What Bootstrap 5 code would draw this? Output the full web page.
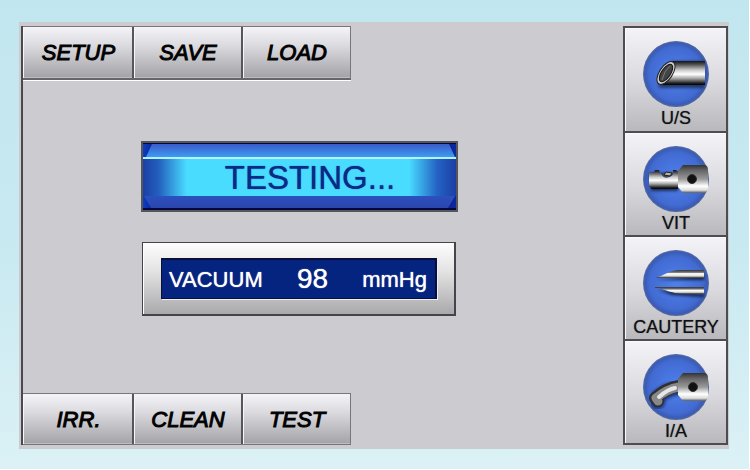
<!DOCTYPE html>
<html lang="en">
<head>
<meta charset="utf-8">
<meta name="viewport" content="width=device-width, initial-scale=1">
<title>Surgical console</title>
<link href="https://cdn.jsdelivr.net/npm/bootstrap@5.3.0/dist/css/bootstrap.min.css" rel="stylesheet">
<style>
  html { background: #fff; }
  body { font-family: "Liberation Sans", Arial, sans-serif; background: linear-gradient(#c2e6ef, #c8e9f1 50%, #dbf1f5); color: #000; margin-right: 1px; padding: 22px 20px 20px 19px; }
  .console { background: #cccbd0; padding: 4px 1px 4px 2px; }
  .main-area { border-left: 2px solid #4a494e; }
  .keys { border: 1px solid #77767b; border-left: 0; width: 328px; max-width: 100%; }
  .keys-top { border-bottom: 2px solid #66656a; box-shadow: 0 1px #fff; }
  .key { height: 50px; border: 0; border-left: 2px solid #56555a; background: linear-gradient(#f4f3f8, #dcdbe0 35%, #a3a2a6); box-shadow: inset 1px 0 #f6f5fa, inset 0 -1px #bdbcc1; color: #000; font-size: 22px; line-height: 24px; font-style: italic; padding: 1px 0 0 1px; -webkit-text-stroke: 1px #000; }
  .keys-top .key { height: 51px; }
  .key:first-child { border-left: 0; padding-left: 2px; }
  .displays { padding-left: 118px; gap: 30px; margin-bottom: 16px; }
  .status { width: 317px; max-width: 100%; border: 2px solid #55555c; background: linear-gradient(90deg, #0c3fc0, #0b1a90 4%, #0b1a90 96%, #0c2aa0); }
  .glass { border-top: 1px solid #05063c; border-bottom: 2px solid #05063c; }
  .bevel { height: 13px; margin: 0 1px 0 3px; background: linear-gradient(#3a5acb, #3d9cf0); clip-path: polygon(6px 0, calc(100% - 6px) 0, 100% 100%, 0 100%); }
  .bevel-low { height: 12px; margin: 0 1px; background: linear-gradient(#2c50c0, #2a46ac); clip-path: polygon(0 0, 100% 0, calc(100% - 7px) 100%, 7px 100%); }
  .lit { border-top: 2px solid #b4f2ff; background: linear-gradient(90deg, #1c3fa4, #2360be 5%, #49dcff 14%, #49dcff 85%, #2462c4 94%, #1c3fa4); color: #0b2a86; font-size: 33px; line-height: 37px; padding-left: 21px; text-shadow: 0 0 1px #0b2a86; }
  .gauge { width: 314px; max-width: 100%; border: 1px solid #45444a; border-right-width: 2px; border-bottom-width: 2px; background: linear-gradient(#fdfdfd, #e3e3e4 40%, #a9a9ab); box-shadow: inset 1px 0 #fff; margin-left: 1px; padding: 15px 17px 15px 18px; }
  .readout { height: 41px; background: #04247f; border: 1px solid #0a0e38; border-top-width: 2px; border-right-width: 2px; box-shadow: 1px 1px #eef0f8; color: #fff; font-size: 22px; padding: 0 8px 0 7px; text-shadow: 0 0 1px #fff; }
  .value { font-size: 28px; }
  .tools { width: 105px; border: 2px solid #4d4c51; gap: 2px; background: #4d4c51; }
  .tool { border: 0; background: linear-gradient(#f4f3f7, #d8d7db 55%, #b9b8bc); box-shadow: inset 1px 1px #fafafc; color: #101014; font-size: 18px; line-height: 20px; height: 103px; padding: 12px 0 0 1px; text-shadow: 0 0 1px #555; }
  .tool + .tool { height: 102px; }
  .tool svg { width: 68px; height: 68px; }
</style>
<script src="https://cdn.jsdelivr.net/npm/bootstrap@5.3.0/dist/js/bootstrap.bundle.min.js"></script>
</head>
<body>
<svg width="0" height="0" class="position-absolute" aria-hidden="true">
  <defs>
    <radialGradient id="disc" cx=".5" cy=".5" r=".5"><stop offset="0" stop-color="#4f80ee"/><stop offset=".8" stop-color="#426bd2"/><stop offset=".93" stop-color="#3a5cb8"/><stop offset="1" stop-color="#54689c"/></radialGradient>
    <linearGradient id="steel" x1="0" y1="0" x2="0" y2="1"><stop offset="0" stop-color="#151515"/><stop offset=".12" stop-color="#444"/><stop offset=".38" stop-color="#ccc"/><stop offset=".55" stop-color="#fff"/><stop offset=".72" stop-color="#aaa"/><stop offset=".92" stop-color="#222"/><stop offset="1" stop-color="#000"/></linearGradient>
    <linearGradient id="hub" x1="0" y1="0" x2="0" y2="1"><stop offset="0" stop-color="#333"/><stop offset=".2" stop-color="#666"/><stop offset=".5" stop-color="#999"/><stop offset=".75" stop-color="#fff"/><stop offset=".9" stop-color="#ddd"/><stop offset="1" stop-color="#555"/></linearGradient>
    <linearGradient id="blade" x1="0" y1="0" x2="0" y2="1"><stop offset="0" stop-color="#333"/><stop offset=".3" stop-color="#777"/><stop offset=".45" stop-color="#fff"/><stop offset=".75" stop-color="#ddd"/><stop offset="1" stop-color="#222"/></linearGradient>
    <filter id="soft" x="-20%" y="-50%" width="140%" height="200%"><feGaussianBlur stdDeviation="1.5"/></filter>
  </defs>
</svg>
<main class="console d-flex justify-content-between">
  <section class="main-area flex-grow-1 d-flex flex-column justify-content-between">
    <div class="keys keys-top row row-cols-3 g-0">
      <button type="button" class="key col">SETUP</button>
      <button type="button" class="key col">SAVE</button>
      <button type="button" class="key col">LOAD</button>
    </div>
    <div class="displays d-flex flex-column">
      <div class="status" role="status">
        <div class="glass">
          <div class="bevel"></div>
          <div class="lit text-center">TESTING...</div>
          <div class="bevel-low"></div>
        </div>
      </div>
      <div class="gauge">
        <div class="readout d-flex justify-content-between align-items-center">
          <span>VACUUM</span><span class="value">98</span><span>mmHg</span>
        </div>
      </div>
    </div>
    <div class="keys row row-cols-3 g-0">
      <button type="button" class="key col">IRR.</button>
      <button type="button" class="key col">CLEAN</button>
      <button type="button" class="key col">TEST</button>
    </div>
  </section>
  <nav class="tools d-flex flex-column" aria-label="Handpieces">
    <button type="button" class="tool d-flex flex-column align-items-center">
      <svg viewBox="0 0 68 68" aria-hidden="true"><circle cx="34" cy="34" r="33" fill="url(#disc)"/>
        <path d="M16 47 30 21H62V48H20Z" filter="url(#soft)" opacity=".5"/>
        <path d="M31 21H63V45H19C15 45 14 41 17 35 20 27 26 22 31 21Z" fill="url(#steel)"/>
        <ellipse cx="24" cy="33" rx="13" ry="6.500" transform="rotate(-56 24 33)" fill="#ccc" stroke="#222"/>
        <ellipse cx="24" cy="33" rx="10" ry="4.500" transform="rotate(-56 24 33)" fill="#444" stroke="#111"/>
        <path d="M20 40Q22 31 28 26" fill="none" stroke="#777" stroke-width="1"/></svg>
      U/S
    </button>
    <button type="button" class="tool d-flex flex-column align-items-center">
      <svg viewBox="0 0 68 68" aria-hidden="true"><circle cx="34" cy="34" r="33" fill="url(#disc)"/>
        <path d="M7 28H36V46H9Z" filter="url(#soft)" opacity=".6"/>
        <path d="M7 28 9 28 12 27 13 25H17C19 33 29 34 31 29V25H34L36 27V44H10L7 41Z" fill="url(#steel)"/>
        <path d="M20 30C22 34 27 33 30 30L29 27H23Z" fill="#3c4a66"/>
        <path d="M22 30 24 27 30 28 28 31Z" fill="#b8b89c" stroke="#222"/>
        <path d="M36 26 41 20H62Q66 20 66 25V43Q65 48 61 48H41L36 42Z" fill="url(#hub)"/>
        <circle cx="50" cy="34" r="4.500" fill="#111" stroke="#333"/></svg>
      VIT
    </button>
    <button type="button" class="tool d-flex flex-column align-items-center">
      <svg viewBox="0 0 68 68" aria-hidden="true"><circle cx="34" cy="34" r="33" fill="url(#disc)"/>
        <path d="M14 31 62 26V31Z M16 41 62 45V48L30 46Z" filter="url(#soft)" opacity=".7"/>
        <path d="M13 29C22 27 27 21 38 21H62V29Z" fill="url(#blade)"/>
        <path d="M13 38H62V45H42C30 45 24 40 13 39Z" fill="url(#blade)"/></svg>
      CAUTERY
    </button>
    <button type="button" class="tool d-flex flex-column align-items-center">
      <svg viewBox="0 0 68 68" aria-hidden="true"><circle cx="34" cy="34" r="33" fill="url(#disc)"/>
        <g fill="none" stroke-linecap="round" stroke-linejoin="round">
          <path d="M37 35Q24 36 14 46L16 49" stroke="#0a1440" stroke-width="14" filter="url(#soft)" opacity=".7"/>
          <path d="M37 33Q24 35 13 45L16 48" stroke="#2f2f2f" stroke-width="12"/>
          <path d="M37 34Q25 36 14 45L16 48" stroke="#888" stroke-width="9"/>
          <path d="M33 35Q26 36 17 44" stroke="#e6e6e6" stroke-width="4"/></g>
        <path d="M36 26 41 20H62Q66 20 66 25V43Q65 48 61 48H41L36 42Z" fill="url(#hub)"/>
        <circle cx="51" cy="34" r="4.500" fill="#111" stroke="#333"/></svg>
      I/A
    </button>
  </nav>
</main>
</body>
</html>
